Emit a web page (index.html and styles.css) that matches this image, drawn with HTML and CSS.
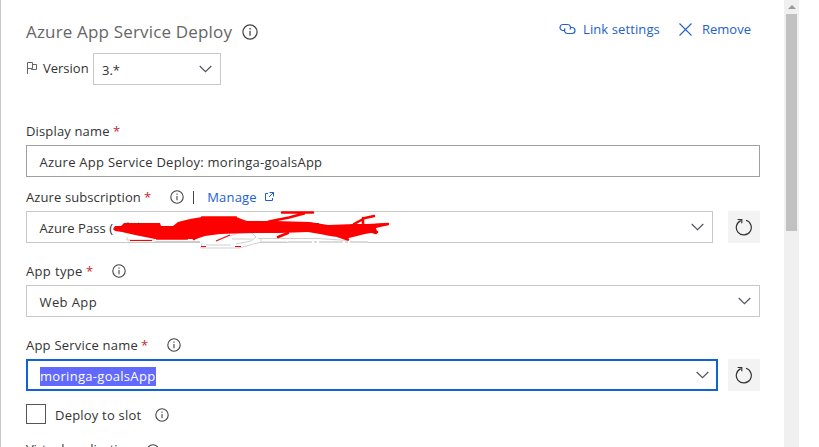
FILE: index.html
```html
<!DOCTYPE html>
<html lang="en">
<head>
<meta charset="utf-8">
<title>Azure App Service Deploy</title>
<link rel="stylesheet" href="styles.css">
</head>
<body>
<svg class="defs" width="0" height="0">
  <symbol id="info" viewBox="0 0 14 14"><circle cx="7" cy="7" r="6.2" fill="none" stroke="currentColor" stroke-width="1.1"/><path d="M7 6v4.3M7 3.6v1.2" fill="none" stroke="currentColor" stroke-width="1.1"/></symbol>
  <symbol id="chev" viewBox="0 0 13 8"><path d="M.7 1l5.800 5.600L12.300 1" fill="none" stroke="currentColor" stroke-width="1.200"/></symbol>
  <symbol id="refresh" viewBox="0 0 18 18"><path d="M11 2.300A7.500 7.500 0 1 1 5.800 2.600M2.600 1.500h4.200v3.800" fill="none" stroke="currentColor" stroke-width="1.200"/></symbol>
</svg>
<div class="page">
  <main class="panel">
    <header class="head">
      <h1>Azure App Service Deploy</h1><svg class="info big"><use href="#info"/></svg>
      <nav class="actions">
        <a class="act"><svg class="link" viewBox="0 0 17 12"><path d="M5.500 7.500H4a3 3 0 0 1 0-6h4.500a3 3 0 0 1 2.300 5M11.500 4.500H13a3 3 0 0 1 0 6H8.500a3 3 0 0 1-2.300-5" fill="none" stroke="currentColor" stroke-width="1.200"/></svg><span class="t-link">Link settings</span></a>
        <a class="act"><svg class="close" viewBox="0 0 13 13"><path d="M.5.500l12 12M12.500.500l-12 12" fill="none" stroke="currentColor" stroke-width="1.100"/></svg><span class="t-remove">Remove</span></a>
      </nav>
    </header>
    <div class="version">
      <svg class="flag" viewBox="0 0 12 13"><path d="M1.500 13V1.500h5v6h-5M6.500 3.500h4v5h-5v-1" fill="none" stroke="currentColor"/></svg>
      <span class="t-version">Version</span>
      <div class="field ver"><span>3.*</span><svg class="chev"><use href="#chev"/></svg></div>
    </div>
    <div class="label first"><span class="t-display">Display name</span><b>*</b></div>
    <div class="field dark"><span class="t-value">Azure App Service Deploy: moringa-goalsApp</span></div>
    <div class="label second"><span class="t-sub">Azure subscription</span><b>*</b><svg class="info"><use href="#info"/></svg><i></i><a class="t-manage">Manage</a><svg class="ext" viewBox="0 0 10 10"><path d="M4 1.500H1.500v7h7V6M5.500.500h4v4M9.500.500l-4.500 4.500" fill="none" stroke="currentColor"/></svg></div>
    <div class="row">
      <div class="field sub"><span class="t-pass">Azure Pass (</span><svg class="chev"><use href="#chev"/></svg>
        <svg class="scribble" viewBox="100 200 310 60">
          <path fill="none" stroke="#fff" stroke-width="1.500" d="M200 242.500h60M288 242.500h80"/>
          <g fill="none" stroke="#cfcfcf"><path d="M127 237v3h28M155 241.500h45M230 236l8-3h14l4 4-5 4-15 3M202 243l-1 5h38l22-6v-4M232 239h20M206 245h25M258 238.500h60l30 2M262 242h25"/><path d="M288 242h80" stroke-width="1.500" stroke-dasharray="24 2 3 2"/></g>
          <path fill="red" d="M113 229L115 226 121 226 124 223 160 223 161 226 173 226 178 222 190 219 202 217 236 217 247 221 275 221 310 222 328 225 355 224 366 224 389 223 389 225 376 228 377 232 365 234 349 238 345 238 330 236 320 234 308 232 280 233 250 233 220 234 205 236 196 239 155 239 135 235 122 232 115 231z"/>
          <g fill="none" stroke="red" stroke-width="2.500" stroke-linecap="round" stroke-linejoin="round"><path d="M282 212.500h31M304 213.500l-15 4-20 4M354 224l11-6 9-2M363 218v7M366 226l22-2M366 230l10 3M338 236l10 3.500M194 239l8-5M278 237l10-4M157 238.500h30M202 217.500h34M372 229l5 3"/></g>
          <path fill="none" stroke="red" stroke-width="1.200" d="M130 240.500h22M216 241l14-6M201 246.500h5M235 246.500h6"/>
          <path fill="none" stroke="#533" stroke-width=".8" d="M127 223h2M138 223l3 1M316 223.500h3M351 225h2M375 231v2"/>
        </svg>
      </div>
      <button class="refresh"><svg><use href="#refresh"/></svg></button>
    </div>
    <div class="label"><span class="t-type">App type</span><b>*</b><svg class="info"><use href="#info"/></svg></div>
    <div class="field"><span class="t-web">Web App</span><svg class="chev"><use href="#chev"/></svg></div>
    <div class="label"><span class="t-name">App Service name</span><b>*</b><svg class="info"><use href="#info"/></svg></div>
    <div class="row">
      <div class="field focus"><span class="selected">moringa-goalsApp</span><svg class="chev"><use href="#chev"/></svg></div>
      <button class="refresh"><svg><use href="#refresh"/></svg></button>
    </div>
    <div class="check"><span class="box"></span><span class="t-slot">Deploy to slot</span><svg class="info"><use href="#info"/></svg></div>
    <div class="label last"><span class="t-virt">Virtual application</span><svg class="info"><use href="#info"/></svg></div>
  </main>
  <aside class="scroll"><span class="arrow"></span><span class="thumb"></span></aside>
</div>
</body>
</html>
```
FILE: styles.css
```css
* { box-sizing: border-box; }
body { margin: 0; background: #fff; color: #333; font: 13px/20px "Open Sans", "Noto Sans", sans-serif; }
span, h1, a { white-space: nowrap; }
svg { display: block; flex: none; }
.defs { position: absolute; }
.page { display: flex; width: 819px; height: 447px; overflow: hidden; }
.panel { width: 784px; border-left: 1px solid #c8c8c8; padding: 20px 24px 0 25px; }
.head { display: flex; align-items: center; height: 24px; }
h1 { margin: 0; font-size: 17px; font-weight: 400; color: #666; width: 206px; letter-spacing: .17px; }
.info { width: 14px; height: 14px; margin-left: 19px; color: #444; }
.info.big { width: 16px; height: 16px; margin-left: 10px; }
.actions { display: flex; margin-left: auto; margin-right: 9px; margin-top: -6px; gap: 18px; color: #2560c8; }
.act { display: flex; align-items: center; }
.link { width: 17px; height: 12px; margin-right: 7px; }
.t-link { width: 78px; letter-spacing: .1px; }
.close { width: 13px; height: 13px; margin-right: 10px; }
.version { display: flex; align-items: center; height: 32px; margin-top: 9px; }
.flag { width: 12px; height: 13px; margin: -3px 5px 0 0; color: #666; }
.t-version { width: 50px; margin-top: -2px; }
.field { position: relative; display: flex; align-items: center; height: 32px; width: 734px; border: 1px solid #c8c8c8; padding: 2px 8px 0 12.500px; background: #fff; }
.field .chev { margin-left: auto; margin-top: -3px; }
.chev { width: 13px; height: 8px; color: #505560; }
.ver { width: 128px; padding-left: 8px; }
.dark { border-color: #a0a0a0; }
.t-value { letter-spacing: .26px; }
.t-pass { letter-spacing: .05px; }
.t-web { letter-spacing: .4px; }
.label { display: flex; align-items: center; height: 28px; margin-top: 14px; }
.label.first { margin-top: 32px; }
.label.second { margin-top: 6px; }
.label b { color: #c4262e; font-weight: 400; margin-left: 3px; }
.label i { width: 1px; height: 13px; background: #444; margin: 0 13px 0 9px; }
.t-display { width: 84px; letter-spacing: .15px; }
.t-sub { width: 115px; letter-spacing: .1px; }
.t-type { width: 57px; letter-spacing: .35px; }
.t-name { width: 112px; letter-spacing: .22px; }
.t-manage { width: 50px; color: #1a60d6; letter-spacing: .2px; }
.ext { width: 10px; height: 10px; margin-left: 7px; color: #1a60d6; }
.row { display: flex; justify-content: space-between; }
.sub { width: 687px; }
.focus { width: 692px; border: 2px solid #0f62d8; padding: 2px 8px 0 12px; }
.selected { background: #6169ff; color: #fff; line-height: 19px; width: 116px; letter-spacing: .3px; margin-top: 1px; }
.refresh { width: 32px; height: 32px; border: 0; padding: 7px; background: #f3f3f3; color: #333; }
.refresh svg { width: 18px; height: 18px; }
.scribble { position: absolute; left: 73px; top: -12px; width: 310px; height: 60px; }
.check { display: flex; align-items: center; height: 20px; margin-top: 13px; }
.box { width: 20px; height: 20px; border: 1px solid #555; margin-right: 9px; }
.t-slot { width: 86px; letter-spacing: .2px; margin-top: 2px; }
.check .info { margin: 2px 0 0 14px; }
.label.last { margin-top: 13px; }
.t-virt { width: 107px; letter-spacing: -.15px; margin-top: -4px; }
.label.last .info { margin-left: 13px; }
.scroll { width: 15px; background: #f0f0f0; display: flex; flex-direction: column; align-items: center; }
.arrow { border: 4px solid transparent; border-top: 0; border-bottom: 4px solid #999; margin: 5px 0; }
.thumb { width: 11px; height: 217px; background: #c1c1c1; }
.focus .chev { margin-right: -1px; }
```
